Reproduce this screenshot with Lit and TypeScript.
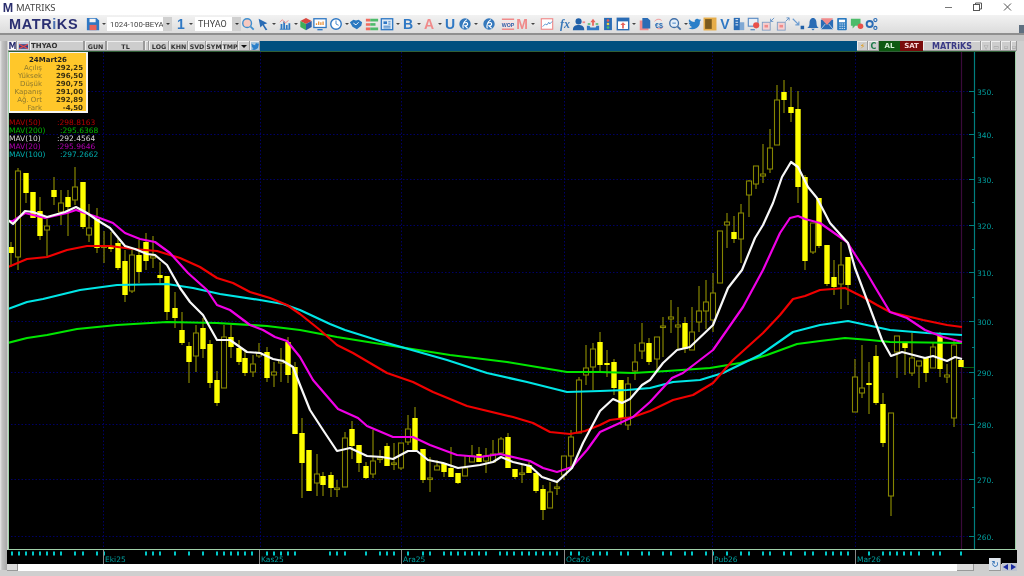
import { LitElement, html, svg, css } from 'lit';
import { customElement } from 'lit/decorators.js';

// ── Matriks chart window ──────────────────────────────────────────────────────
//
// Chart data is kept in page pixels, the svg viewBox lines up with the page.

type Candle = [number, number, number, number, number, number];

// x, wick top, wick bottom, body top, body bottom, filled
const CANDLES: Candle[] = [
  [11, 242, 267, 247, 253, 1], [18, 168, 270, 171, 257, 0], [26, 173, 203, 173, 193, 1], [33, 192, 218, 192, 218, 1],
  [40, 197, 240, 211, 236, 1], [47, 219, 256, 226, 230, 0], [54, 177, 205, 190, 197, 1], [61, 190, 225, 203, 212, 0],
  [68, 190, 236, 197, 207, 1], [75, 167, 205, 187, 200, 0], [83, 182, 229, 182, 227, 1], [89, 204, 242, 228, 235, 0],
  [97, 208, 253, 219, 248, 1], [104, 231, 263, 246, 247, 0], [111, 232, 252, 246, 249, 1], [118, 239, 270, 243, 268, 1],
  [125, 250, 302, 261, 295, 1], [132, 250, 293, 255, 291, 0], [139, 240, 283, 255, 272, 1], [146, 233, 270, 242, 261, 1],
  [153, 236, 268, 256, 258, 0], [160, 262, 283, 275, 278, 1], [167, 276, 320, 276, 312, 1], [175, 292, 328, 308, 318, 1],
  [182, 312, 345, 330, 343, 1], [189, 342, 383, 346, 362, 1], [196, 325, 372, 333, 356, 0], [203, 318, 358, 328, 349, 1],
  [210, 340, 388, 344, 383, 1], [217, 371, 406, 380, 403, 1], [224, 325, 388, 337, 388, 0], [231, 325, 358, 337, 347, 1],
  [239, 340, 365, 348, 362, 1], [245, 350, 376, 358, 373, 1], [253, 355, 377, 364, 372, 0], [259, 343, 358, 353, 356, 0],
  [267, 347, 382, 352, 378, 1], [274, 362, 387, 372, 375, 0], [281, 348, 382, 360, 363, 0], [288, 337, 383, 342, 375, 1],
  [295, 362, 434, 367, 434, 1], [302, 418, 498, 433, 463, 1], [309, 450, 491, 450, 491, 1], [317, 454, 496, 474, 483, 0],
  [323, 472, 496, 476, 485, 1], [331, 472, 497, 475, 488, 1], [337, 480, 497, 488, 489, 0], [345, 432, 487, 438, 487, 0],
  [352, 421, 459, 429, 446, 1], [359, 445, 472, 445, 463, 1], [366, 462, 479, 466, 478, 1], [373, 430, 478, 461, 474, 0],
  [380, 450, 463, 458, 459, 0], [387, 443, 466, 446, 466, 1], [394, 443, 470, 463, 464, 0], [401, 443, 470, 443, 468, 0],
  [408, 415, 445, 429, 442, 0], [415, 407, 450, 418, 450, 1], [423, 449, 483, 449, 480, 1], [430, 457, 492, 478, 479, 0],
  [437, 460, 470, 466, 470, 0], [444, 463, 477, 463, 472, 1], [451, 447, 477, 468, 477, 1], [458, 473, 484, 473, 483, 1],
  [465, 455, 476, 468, 476, 0], [472, 445, 462, 456, 462, 0], [479, 447, 462, 454, 462, 1], [486, 448, 473, 456, 461, 0],
  [493, 440, 462, 454, 462, 0], [501, 437, 453, 439, 453, 0], [508, 433, 468, 437, 468, 1], [515, 469, 479, 469, 477, 1],
  [522, 465, 483, 473, 474, 0], [529, 462, 473, 465, 473, 1], [536, 473, 493, 473, 491, 1], [543, 485, 520, 489, 510, 1],
  [550, 482, 508, 492, 508, 0], [557, 480, 495, 487, 488, 0], [564, 456, 480, 456, 475, 0], [571, 430, 467, 437, 456, 0],
  [579, 377, 433, 380, 433, 0], [586, 345, 385, 368, 375, 0], [593, 343, 390, 349, 367, 0], [600, 332, 372, 342, 365, 1],
  [607, 350, 377, 363, 365, 1], [614, 359, 395, 362, 388, 1], [621, 380, 425, 380, 418, 1], [628, 377, 430, 384, 425, 0],
  [635, 344, 380, 362, 371, 0], [642, 323, 359, 343, 351, 0], [649, 338, 365, 343, 362, 1], [657, 337, 370, 337, 359, 0],
  [663, 317, 357, 326, 327, 0], [671, 300, 333, 317, 319, 0], [678, 307, 350, 325, 327, 0], [685, 317, 353, 323, 349, 1],
  [692, 307, 350, 332, 350, 0], [699, 286, 332, 311, 322, 0], [706, 280, 329, 302, 311, 0], [713, 273, 332, 293, 320, 0],
  [720, 231, 283, 231, 283, 0], [727, 213, 248, 222, 225, 0], [734, 216, 243, 232, 239, 1], [741, 204, 263, 213, 239, 0],
  [749, 180, 217, 181, 195, 0], [756, 166, 189, 166, 184, 0], [763, 144, 183, 174, 176, 0], [770, 129, 173, 148, 169, 0],
  [777, 85, 145, 100, 145, 0], [784, 80, 113, 92, 100, 1], [791, 87, 122, 107, 113, 1], [798, 91, 203, 109, 187, 1],
  [805, 175, 270, 177, 261, 1], [813, 223, 254, 223, 252, 0], [819, 198, 248, 198, 246, 1], [827, 245, 286, 245, 284, 1],
  [834, 260, 295, 277, 287, 1], [841, 242, 309, 265, 284, 0], [848, 257, 305, 257, 285, 1], [855, 359, 412, 377, 412, 0],
  [862, 345, 398, 388, 393, 0], [869, 362, 414, 383, 384, 1], [876, 345, 405, 356, 403, 1], [883, 393, 447, 404, 443, 1],
  [891, 413, 516, 413, 496, 0], [897, 336, 378, 336, 352, 0], [905, 342, 375, 342, 348, 1], [912, 333, 376, 358, 373, 0],
  [919, 361, 388, 361, 366, 0], [926, 358, 382, 358, 373, 1], [933, 343, 368, 347, 368, 0], [940, 332, 377, 336, 369, 1],
  [947, 364, 383, 375, 377, 0], [954, 340, 427, 345, 418, 0], [961, 358, 367, 360, 367, 1],
];

const WHITE = '8,220 13,224 25,211 33,212 47,217 65,212 76,207 87,213 97,220 110,228 125,246 135,249 147,254 155,255 167,265 180,288 190,302 203,315 217,340 230,340 247,352 260,353 273,359 283,361 293,367 300,385 310,410 323,430 337,451 350,448 367,456 382,457 393,459 408,451 417,451 428,460 443,463 458,468 480,465 493,462 501,457 513,462 530,466 542,477 557,482 572,468 583,443 600,411 613,399 622,403 630,399 642,385 650,380 663,363 677,350 690,347 713,325 728,288 742,270 755,238 763,225 773,203 782,177 791,162 798,167 808,187 817,198 830,223 848,243 855,268 867,300 882,340 891,356 902,352 925,358 933,356 947,361 955,357 962,359';
const MAGENTA = '8,221 13,221 25,213 45,218 67,213 76,210 97,217 113,223 125,233 140,239 155,242 170,253 188,273 207,290 217,305 230,310 250,325 263,330 275,337 287,341 300,357 313,380 338,409 358,418 367,426 393,437 413,437 430,445 457,455 480,457 500,454 530,461 543,468 557,472 572,467 587,450 600,432 633,417 650,402 672,378 683,373 713,350 727,330 743,307 763,270 780,233 790,218 798,216 805,219 820,223 847,242 865,270 875,287 890,312 907,318 925,330 943,337 962,342';
const RED = '8,267 27,259 47,257 67,250 87,246 110,246 133,249 157,251 180,258 200,267 217,278 233,283 250,292 270,298 287,305 300,314 320,330 337,345 353,353 387,373 413,382 433,392 467,406 513,417 533,423 550,432 570,434 585,431 600,425 610,420 633,417 650,411 673,400 693,395 713,383 733,360 763,333 780,315 793,299 805,296 820,290 845,288 863,297 877,305 890,312 923,320 947,325 962,327';
const CYAN = '8,309 27,302 43,299 80,290 117,285 167,284 193,288 220,294 260,300 283,304 300,310 330,324 345,330 380,341 447,360 487,373 527,382 567,392 600,391 627,390 650,388 673,382 700,380 723,373 760,355 793,332 820,325 848,321 890,330 927,333 962,335';
const GREEN = '8,343 27,338 47,335 77,329 117,325 167,322 217,323 267,326 300,330 337,337 393,346 450,355 507,362 567,372 600,372 633,373 667,371 710,368 740,363 767,355 797,344 820,341 845,338 870,340 890,342 962,343';

const MAJOR = [[91, '350.'], [134, '340.'], [179, '330.'], [225, '320.'], [272, '310.'], [321, '300.'], [372, '290.'], [424, '280.'], [479, '270.'], [536, '260.']] as const;
const MINOR = [112, 157, 202, 249, 297, 347, 398, 452, 507];
const V_GRID = [103, 260, 401, 564, 712, 855];

const TIME_TICKS = [12, 19, 26, 33, 40, 47, 54, 61, 75, 83, 97, 104, 146, 153, 160, 175, 189, 203, 217, 224, 231, 238, 245, 252, 267, 274, 281, 288, 295, 330, 337, 345, 366, 380, 387, 394, 408, 423, 430, 444, 451, 458, 465, 472, 479, 486, 500, 507, 514, 522, 529, 536, 543, 550, 557, 571, 579, 593, 600, 607, 621, 628, 642, 649, 663, 671, 685, 692, 706, 713, 727, 741, 749, 763, 770, 784, 791, 805, 813, 826, 833, 841, 848, 869, 883, 890, 897, 904, 911, 919, 933, 940, 961];
const MONTHS: [number, string][] = [[103, 'Eki25'], [259, 'Kas25'], [401, 'Ara25'], [564, 'Oca26'], [712, 'Pub26'], [855, 'Mar26']];

const BLUE = '#2f78c4';
const PINK = '#f08a8a';

const ICONS: Record<string, ReturnType<typeof svg>> = {
  search: svg`<circle cx="7" cy="7" r="5" fill="#f6c9c0" stroke="#3f8fcf" stroke-width="1.6"/><path d="M11 11l3.5 3.5" stroke="#3f8fcf" stroke-width="2"/>`,
  cursor: svg`<path d="M3 2l10 5-4 1.5 4 6-2 .5-3.5-5.500L5 12z" fill="#2a6cb5"/>`,
  bars: svg`<path d="M2 14h12" stroke="${BLUE}"/><path d="M3 14V8h2v6zm3 0V5h2v9zm3 0V9h2v5zm3 0V7h2v7z" fill="${BLUE}"/><path d="M2 6l3-3 3 4 4-3" stroke="${PINK}" fill="none"/>`,
  cube: svg`<path d="M8 1l6.500 3.500L8 8 1.500 4.500z" fill="#d9473f"/><path d="M1.500 4.500L8 8v7l-6.500-3.500z" fill="#3fae5a"/><path d="M14.500 4.500L8 8v7l6.500-3.500z" fill="#2a5fa8"/>`,
  monitor: svg`<rect x="1" y="2" width="14" height="10" fill="#fff" stroke="${BLUE}" stroke-width="1.500"/><path d="M4 9V7m2.500 2V5m2.500 4V6m2.500 3V5" stroke="#e8923c" stroke-width="1.500"/><path d="M5 14.500h6" stroke="${BLUE}" stroke-width="1.500"/>`,
  clock: svg`<circle cx="8" cy="8" r="6" fill="#fff" stroke="${BLUE}" stroke-width="1.600"/><path d="M8 4v4l3 1.500" stroke="${BLUE}" fill="none"/>`,
  shake: svg`<path d="M1 6l4-3 3 1 3-1 4 3-1 4-5 4-5-3z" fill="#2a78c0"/><path d="M5 7l3 2 3-3" stroke="#fff" fill="none"/>`,
  list: svg`<path d="M1 2h5v3H1zM1 7h5v3H1zM1 12h5v3H1z" fill="#ef6a5e"/><path d="M6 2h9v3H6zM6 12h9v3H6z" fill="#4dbb6a"/><path d="M6 7h6v3H6z" fill="#4dbb6a"/>`,
  doc: svg`<rect x="1.500" y="2" width="13" height="12.500" fill="#dbe8f5" stroke="${BLUE}" stroke-width="1.500"/><path d="M4 5h4v3H4z" fill="${BLUE}"/><path d="M9.500 5.500H12M9.500 8H12M4 10.500h8M4 12.500h8" stroke="${BLUE}"/>`,
  swirl: svg`<circle cx="8" cy="8" r="6.500" fill="#3579bd"/><path d="M6 13c-1-4 1-8 4-10M7 7c2-1 4-1 4 1 0 2-2 2-3 2l3 3" stroke="#fff" stroke-width="1.300" fill="none"/>`,
  wop: svg`<path d="M1 2.500h14M1 14h14" stroke="${PINK}" stroke-width="1.800"/><rect x="1" y="5" width="14" height="7" fill="#fbe2e2"/><text x="8" y="11" font-size="6" font-weight="700" text-anchor="middle" fill="#2a5fa8" font-family="Liberation Sans, sans-serif">WOP</text>`,
  frame: svg`<rect x="1.500" y="2" width="13" height="12" fill="#fff" stroke="${PINK}" stroke-width="1.300"/><path d="M3 11l3-3 2 1 2-3 1 2 3-3" stroke="#4d8bc9" fill="none"/>`,
  person: svg`<circle cx="7.500" cy="5" r="3.500" fill="#1f5fa8"/><path d="M1 15c0-5 3-6 6.500-6s6.500 1 6.500 6z" fill="#1f5fa8"/><path d="M12 5h3v2h-3z" fill="${PINK}"/>`,
  inbox: svg`<path d="M1 10h3l1 2h6l1-2h3v5H1z" fill="${BLUE}"/><path d="M8 2l3 4H9v4H7V6H5z" fill="#e8635a"/><path d="M2 8h3M11 8h3" stroke="#4dbb6a" stroke-width="1.500"/>`,
  traffic: svg`<rect x="3.500" y="1" width="9" height="14" fill="#2a6cb5"/><circle cx="8" cy="4" r="1.500" fill="#f05a4a"/><circle cx="8" cy="8" r="1.500" fill="#f0d040"/><circle cx="8" cy="12" r="1.500" fill="#4dbb6a"/>`,
  box: svg`<rect x="1.500" y="1.500" width="13" height="13" fill="#fff" stroke="#2a6cb5" stroke-width="1.600"/><path d="M2 2h12v3H2z" fill="#2a6cb5"/><path d="M8 6l3 3H9v4H7V9H5z" fill="#e8635a"/>`,
  docs: svg`<path d="M2 4h7l3 3v8H2z" fill="${PINK}"/><path d="M5 1h6l3 3v9H5z" fill="#2a6cb5"/>`,
  money: svg`<path d="M3 5c2-3 6-3 8-1M13 11c-2 3-6 3-8 1" stroke="${PINK}" fill="none"/><text x="8" y="12" font-size="8" font-weight="700" text-anchor="middle" fill="#2a6cb5" font-family="Liberation Sans, sans-serif">€$</text>`,
  glass: svg`<circle cx="7" cy="7" r="5" fill="#e4eef8" stroke="#3f6fa8" stroke-width="1.500"/><path d="M11 11l3.500 3.500" stroke="#3f6fa8" stroke-width="2"/><path d="M5 7h4" stroke="${BLUE}"/>`,
  twitter: svg`<path d="M15 3.500c-.5.3-1.100.4-1.700.5.6-.4 1.100-1 1.300-1.700-.6.3-1.200.6-1.900.7a3 3 0 0 0-5.100 2.700C5 5.600 2.800 4.400 1.300 2.600c-.8 1.400-.4 3.100.9 4-.5 0-.9-.1-1.300-.4 0 1.500 1 2.700 2.400 3-.4.1-.9.100-1.300 0 .4 1.200 1.500 2 2.800 2.100A6 6 0 0 1 .5 12.600 8.500 8.500 0 0 0 13.600 5c.6-.4 1-.9 1.400-1.500z" fill="#2a7fc9"/>`,
  note: svg`<rect x="1.500" y="1.500" width="13" height="13" fill="#7a5a1e" stroke="#e6ad4a" stroke-width="1.800"/><path d="M10 2h4v12h-4z" fill="#e6ad4a"/>`,
  build: svg`<path d="M2 1h7v14H2z" fill="#2a6cb5"/><path d="M9 6h5v9H9z" fill="#7fa8d4"/><path d="M4 3h3M4 6h3M4 9h3" stroke="#fff"/>`,
  gear: svg`<rect x="1.500" y="1.500" width="11" height="9" fill="#e8eef6" stroke="#5a8cc4" stroke-width="1.300"/><circle cx="10.500" cy="9.500" r="3.500" fill="#e8504a"/><path d="M4 14.500h5" stroke="#5a8cc4" stroke-width="1.500"/>`,
  shrink: svg`<rect x="1.500" y="6" width="9" height="9" fill="#f6cfcf" stroke="#7a9cc4"/><rect x="4" y="9" width="4" height="3" fill="${PINK}"/><path d="M15 1l-4 4m0-3v3h3" stroke="#5a8cc4" fill="none"/>`,
  grow: svg`<rect x="1.500" y="6" width="9" height="9" fill="#f6cfcf" stroke="#7a9cc4"/><rect x="4" y="9" width="4" height="3" fill="${PINK}"/><path d="M11 5l4-4m-3 0h3v3" stroke="#5a8cc4" fill="none"/>`,
  diag: svg`<path d="M2 2l7 7m0-4v4H5" stroke="#6a9bd0" fill="none" stroke-width="1.300"/><rect x="11" y="10" width="4" height="4" fill="#1f5fa8"/>`,
  bell: svg`<path d="M8 1c3 0 4 3 4 6s1 4 2.500 5.500h-13C3 11 4 10 4 7s1-6 4-6z" fill="#2a6cb5"/><path d="M6 13.500h4L8 15.500z" fill="#2a6cb5"/>`,
  mail: svg`<rect x="1" y="3" width="14" height="11" fill="#2a6cb5"/><path d="M1 1.500h14L8 9z" fill="${PINK}"/><path d="M1 14l5-6m9 6l-5-6" stroke="#fff" stroke-width=".7"/>`,
  calc: svg`<rect x="2.500" y="1" width="11" height="14" rx="1" fill="#2a7ac0"/><rect x="4.500" y="3" width="7" height="3" fill="#fff"/><path d="M5 8h1.500M7.500 8H9M10 8h1.500M5 10.500h1.500M7.500 10.500H9M10 10.500h1.500M5 13h1.500M7.500 13H9M10 13h1.500" stroke="#fff"/>`,
  chat: svg`<path d="M1 2h11v8H6l-3 3v-3H1z" fill="#4dbb6a"/><circle cx="12" cy="10.500" r="3.200" fill="#e8504a"/>`,
  gears: svg`<circle cx="6.500" cy="8" r="3.500" fill="none" stroke="#2a6cb5" stroke-width="2.200"/><circle cx="13" cy="3.500" r="1.800" fill="none" stroke="#2a6cb5" stroke-width="1.300"/><circle cx="13" cy="12.500" r="1.800" fill="none" stroke="#2a6cb5" stroke-width="1.300"/>`,
};

// center x on the page, then what to draw; caret means a small dropdown arrow follows
interface Tool { c: number; icon?: string; glyph?: string; cls?: string; caret?: boolean; }

const TOOLS: Tool[] = [
  { c: 248, icon: 'search' }, { c: 263, icon: 'cursor', caret: true }, { c: 285, icon: 'bars', caret: true },
  { c: 306, icon: 'cube' }, { c: 320, icon: 'monitor' }, { c: 336, icon: 'clock', caret: true }, { c: 356, icon: 'shake' },
  { c: 372, icon: 'list' }, { c: 387, icon: 'doc', caret: true }, { c: 408, glyph: 'B', cls: 'blue', caret: true },
  { c: 429, glyph: 'A', cls: 'pink', caret: true }, { c: 450, glyph: 'U', cls: 'blue' }, { c: 465, icon: 'swirl', caret: true },
  { c: 489, icon: 'swirl' }, { c: 508, icon: 'wop' }, { c: 522, glyph: 'M', cls: 'pink', caret: true }, { c: 547, icon: 'frame' },
  { c: 565, glyph: 'fx', cls: 'fx' }, { c: 579, icon: 'person' }, { c: 593, icon: 'inbox' }, { c: 608, icon: 'traffic' },
  { c: 623, icon: 'box', caret: true }, { c: 645, icon: 'docs' }, { c: 659, icon: 'money' }, { c: 675, icon: 'glass', caret: true },
  { c: 695, icon: 'twitter' }, { c: 710, icon: 'note' }, { c: 725, glyph: 'V', cls: 'blue' }, { c: 739, icon: 'build' },
  { c: 754, icon: 'gear' }, { c: 768, icon: 'shrink' }, { c: 783, icon: 'grow' }, { c: 798, icon: 'diag' }, { c: 813, icon: 'bell' },
  { c: 827, icon: 'mail' }, { c: 842, icon: 'calc' }, { c: 857, icon: 'chat' }, { c: 871, icon: 'gears' },
];

const INFO: [string, string][] = [
  ['Açılış', '292,25'], ['Yüksek', '296,50'], ['Düşük', '290,75'], ['Kapanış', '291,00'], ['Ağ. Ort', '292,89'], ['Fark', '-4,50'],
];

const LEGEND: [string, string, string][] = [
  ['red', 'MAV(50)', ':298.8163'], ['green wide', 'MAV(200)', ':295.6368'], ['white', 'MAV(10)', ':292.4564'],
  ['violet', 'MAV(20)', ':295.9646'], ['teal wide', 'MAV(100)', ':297.2662'],
];

const LEFT_TABS: [string, number][] = [['GUN', 21], ['TL', 37]];
const MID_TABS: [string, number][] = [['LOG', 20], ['KHN', 19], ['SVD', 18], ['SYM', 16], ['TMP', 16]];

@customElement('app-root')
export class AppRoot extends LitElement {
  static styles = css`
    :host {
      display: block;
      width: 1024px;
      height: 576px;
      overflow: hidden;
      position: relative;
      background: #cfcfcf;
      font-family: 'DejaVu Sans', sans-serif;
      filter: blur(0.3px);
    }

    .title {
      height: 15px;
      background: #fff;
      display: flex;
      align-items: center;
    }
    .title .m {
      width: 12px;
      margin-left: 2px;
      color: #2b2f6e;
      font: 700 12.5px 'Liberation Sans', sans-serif;
      text-align: center;
    }
    .title .name {
      margin-left: 2px;
      font: 9.5px 'Noto Sans', sans-serif;
      color: #444;
    }
    .title .ctl {
      display: flex;
      margin-left: auto;
    }
    .title svg {
      display: block;
    }

    .toolbar {
      height: 18px;
      background: linear-gradient(#f2f2f2, #dcdcdc);
      display: flex;
      align-items: center;
      box-sizing: border-box;
      position: relative;
    }
    .brand {
      font: 700 14.5px 'Liberation Sans', sans-serif;
      color: #2a2f72;
      letter-spacing: 0.6px;
      margin-left: 9px;
      width: 73px;
      flex: none;
    }
    .brand i {
      font-style: normal;
      color: #4a6fb0;
    }
    .tool {
      width: 15px;
      height: 15px;
      flex: none;
      display: flex;
      align-items: center;
      justify-content: center;
    }
    .tool.save {
      margin-left: 3px;
    }
    .tool svg {
      width: 14px;
      height: 14px;
    }
    .tool.g {
      font: 700 14px 'Liberation Sans', sans-serif;
    }
    .blue { color: #2f78c4; }
    .pink { color: #f08a8a; }
    .tool.fx {
      font: italic 700 12px 'Liberation Serif', serif;
      color: #3a78b8;
    }
    .caret {
      width: 7px;
      flex: none;
      display: flex;
      justify-content: center;
    }
    .caret.num-caret {
      margin-left: 1px;
    }
    .caret::after {
      content: '';
      border: 2px solid transparent;
      border-top: 2.5px solid #444;
      border-bottom: 0;
    }
    .combo {
      height: 14px;
      background: #fff;
      display: flex;
      align-items: center;
      font: 7.8px 'Roboto', sans-serif;
      color: #444;
      padding-left: 3px;
      box-sizing: border-box;
      flex: none;
    }
    .combo.setup { width: 56px; white-space: nowrap; }
    .combo.sym { width: 37px; font-size: 9px; margin-left: 1px; }
    .drop {
      width: 9px;
      height: 14px;
      background: #d0d0d0;
      flex: none;
      display: flex;
      align-items: center;
      justify-content: center;
    }
    .drop::after {
      content: '';
      border: 2px solid transparent;
      border-top: 2.5px solid #333;
      border-bottom: 0;
    }
    .num {
      width: 9px;
      margin-left: 5px;
      font: 700 14px 'Liberation Sans', sans-serif;
      color: #2f78c4;
      flex: none;
    }
    .corner {
      position: absolute;
      right: 0;
      bottom: 0;
      width: 5px;
      height: 8px;
      background: #5f6f80;
    }

    .rule {
      height: 8px;
      border-top: 2px solid #8f8f8f;
      background: #c6c6c6;
      box-sizing: border-box;
    }

    .tabs {
      height: 10px;
      margin: 0 7px 0 8px;
      background: #004f7f;
      display: flex;
      font: 700 6.3px 'DejaVu Sans', sans-serif;
      color: #333;
    }
    .tab {
      background: #cdcdcd;
      box-shadow: inset -1px -1px 0 #9a9a9a, inset 1px 1px 0 #eee;
      display: flex;
      align-items: center;
      justify-content: center;
      flex: none;
      box-sizing: border-box;
    }
    .tab.mark { width: 9px; background: #fff; color: #2b2f6e; font-size: 8px; }
    .tab.flag { width: 13px; background: #c0c8d8; }
    .tab.sym { width: 54px; justify-content: flex-start; padding-left: 1px; font-size: 7px; }
    .tab.pad { width: 4px; }
    .tab.gap1 { width: 1px; }
    .tab.arrow { width: 12px; }
    .tab.arrow::after {
      content: '';
      border: 3px solid transparent;
      border-top: 3px solid #111;
      border-bottom: 0;
    }
    .tab.bird { width: 10px; background: #a9c7dd; }
    .tab svg { display: block; width: 9px; height: 9px; }
    .right { margin-left: auto; display: flex; }
    .tab.bolt { width: 11px; color: #e39a12; font-size: 8px; }
    .tab.c { width: 11px; color: #1d7a4a; font-size: 8px; }
    .tab.buy { width: 21px; background: #0f5a12; color: #d8f0d8; box-shadow: none; font-size: 7px; }
    .tab.sell { width: 23px; background: #7a0c0c; color: #f6d8d8; box-shadow: none; font-size: 7px; }
    .tab.logo { width: 58px; color: #3a3a86; font-size: 8px; }
    .tab.w { width: 10px; color: #999; font-size: 6px; }
    .tab.w5 { width: 6px; color: #999; font-size: 6px; }

    .chart {
      height: 499px;
      margin: 0 8px;
      background: #000;
      border: solid #9fd0a8;
      border-width: 1px 1px 1px 1px;
      border-top-color: #2f5f36;
      box-sizing: border-box;
      position: relative;
    }
    .chart svg {
      display: block;
      width: 1006px;
      height: 497px;
    }
    .left-bar {
      position: absolute;
      left: 0;
      top: 41px;
      width: 7px;
      height: 529px;
      background: linear-gradient(90deg, #e8e8e8, #c2c2c2 30%, #a8a8a8);
    }

    .info {
      position: absolute;
      left: 0;
      top: 0;
      width: 79px;
      height: 61px;
      box-sizing: border-box;
      background: #ffc72a;
      border: 1px solid #f4f4f4;
      border-width: 1px 2px 2px 1px;
      padding: 3px 3px 0 0;
      font-size: 7px;
      line-height: 8px;
      color: #222;
    }
    .info .day { text-align: center; font-weight: 700; margin-left: 3px; }
    .info .row { display: flex; }
    .info .k { width: 32px; text-align: right; color: #8f7a2e; }
    .info .v { flex: 1; text-align: right; font-weight: 700; color: #3a3010; }

    .legend {
      position: absolute;
      left: 0;
      top: 67px;
      font-size: 7.5px;
      line-height: 8px;
    }
    .legend .row { display: flex; }
    .legend .n { width: 48px; }
    .legend .wide .n { width: 51px; }
    .red { color: #b40000; }
    .green { color: #00b400; }
    .white { color: #d8d8d8; }
    .violet { color: #b000b0; }
    .teal { color: #00b0b0; }

    .axis {
      height: 14px;
      margin: 0 7px;
      background: #000;
    }
    .axis svg { display: block; width: 1010px; height: 14px; }

    .scroll {
      height: 7px;
      margin: 0 7px;
      display: flex;
      background: #cfcfcf;
      position: relative;
    }
    .thumb {
      width: 11px;
      background: #ddd;
      box-shadow: inset -1px -1px 0 #999;
      flex: none;
    }
    .track { width: 939px; background: #fff; flex: none; }
    .thumb.end { width: 17px; }
    .refresh {
      position: absolute;
      left: 982px;
      top: -6px;
      width: 12px;
      height: 13px;
      background: #dfe6ee;
      box-shadow: inset -1px -1px 0 #999;
      color: #2a6cb5;
      font-size: 9px;
      line-height: 13px;
      text-align: center;
    }
    .nav {
      position: absolute;
      left: 995px;
      top: -1px;
      width: 15px;
      height: 8px;
      background: #bfc4d0;
      display: flex;
      justify-content: space-around;
      align-items: center;
    }
    .nav .l {
      border: 3px solid transparent;
      border-right: 5px solid #1a2aa0;
      border-left: 0;
    }
    .nav .r {
      border: 3px solid transparent;
      border-left: 5px solid #1a2aa0;
      border-right: 0;
    }
  `;

  private renderTools() {
    let right = 241; // right edge of the symbol combo
    return TOOLS.map(t => {
      const gap = t.c - 7.5 - right;
      right = t.c + 7.5 + (t.caret ? 7 : 0);
      const cls = t.icon ? 'tool' : `tool g ${t.cls}`;
      return html`
        <div class=${cls} style="margin-left:${gap}px">
          ${t.icon ? html`<svg viewBox="0 0 16 16">${ICONS[t.icon]}</svg>` : t.glyph}
        </div>
        ${t.caret ? html`<div class="caret"></div>` : ''}
      `;
    });
  }

  private renderCandles() {
    return CANDLES.map(([x, wt, wb, bt, bb, f]) => svg`
      <rect x=${x - 0.6} y=${wt} width="1.2" height=${wb - wt} fill="#858500"></rect>
      ${f
        ? svg`<rect x=${x - 2.7} y=${bt} width="5.4" height=${Math.max(bb - bt, 2)} fill="#ffff00"></rect>`
        : svg`<rect x=${x - 2.5} y=${bt} width="5" height=${Math.max(bb - bt, 1.5)} fill="#000" stroke="#858500" stroke-width="1.1"></rect>`}
    `);
  }

  private renderChart() {
    return svg`
      ${MAJOR.map(([y]) => svg`<line x1="11" x2="974" y1=${y + 0.5} y2=${y + 0.5} stroke="#000066" stroke-dasharray="1.500 2"></line>`)}
      ${V_GRID.map(x => svg`<line x1=${x + 0.5} x2=${x + 0.5} y1="52" y2="549" stroke="#000066" stroke-dasharray="1.500 2"></line>`)}
      <line x1="961.500" x2="961.500" y1="52" y2="549" stroke="#3a0a3a" stroke-width="1.200"></line>
      ${this.renderCandles()}
      ${[[GREEN, '#00e600'], [CYAN, '#00e6e6'], [RED, '#f00000'], [MAGENTA, '#f000e6'], [WHITE, '#f8f8f8']].map(
        ([pts, c]) => svg`<polyline points=${pts} fill="none" stroke=${c} stroke-width="2.200" stroke-linejoin="round"></polyline>`,
      )}
      <line x1="962" x2="974" y1="367.500" y2="367.500" stroke="#0a5a0a"></line>
      <line x1="974.500" x2="974.500" y1="52" y2="549" stroke="#007f7f" stroke-width="1.200"></line>
      ${MAJOR.map(([y, t]) => svg`
        <line x1="969" x2="975" y1=${y + 0.5} y2=${y + 0.5} stroke="#007f7f"></line>
        <text x="977" y=${y + 3.5} font-size="7.500" fill="#00a0a0">${t}</text>
      `)}
      ${MINOR.map(y => svg`<line x1="972" x2="975" y1=${y + 0.5} y2=${y + 0.5} stroke="#007f7f"></line>`)}
    `;
  }

  private renderAxis() {
    return svg`
      ${TIME_TICKS.map(x => svg`<rect x=${x - 1} y="1.500" width="2" height="4" fill="#00c8c8"></rect>`)}
      ${MONTHS.map(([x, t]) => svg`
        <line x1=${x + 0.5} x2=${x + 0.5} y1="0" y2="14" stroke="#888"></line>
        <text x=${x + 2} y="12" font-size="7.500" fill="#00a0a0">${t}</text>
      `)}
    `;
  }

  render() {
    return html`
      <div class="title">
        <div class="m">M</div>
        <div class="name">MATRIKS</div>
        <div class="ctl">
          <svg width="79" height="15" viewBox="0 0 79 15">
            <path d="M0 7.500h7" stroke="#777"></path>
            <rect x="28.500" y="4.500" width="6" height="6" fill="none" stroke="#555"></rect>
            <path d="M30.500 4.500v-1.500h6v6h-2" fill="none" stroke="#555"></path>
            <path d="M59 3.500l7 7m0-7l-7 7" stroke="#555"></path>
          </svg>
        </div>
      </div>
      <div class="toolbar">
        <div class="brand">MATR<i>i</i>KS</div>
        <div class="tool save">
          <svg viewBox="0 0 16 16">
            <path d="M1 1h11l3 3v11H1z" fill="#2f78c4"></path>
            <rect x="4" y="2" width="7" height="4" fill="#f4f4f4"></rect>
            <rect x="4" y="9" width="8" height="6" fill="#e8635a"></rect>
          </svg>
        </div>
        <div class="caret"></div>
        <div class="combo setup">1024-100-BEYA</div>
        <div class="drop"></div>
        <div class="num">1</div>
        <div class="caret num-caret"></div>
        <div class="combo sym">THYAO</div>
        <div class="drop"></div>
        ${this.renderTools()}
        <div class="corner"></div>
      </div>
      <div class="rule"></div>
      <div class="tabs">
        <div class="tab mark">M</div>
        <div class="tab flag">
          <svg viewBox="0 0 12 12"><path d="M0 3h12v6H0z" fill="#2a3f8a"></path><path d="M0 3l12 6M12 3L0 9" stroke="#e24a4a" stroke-width="1.500"></path></svg>
        </div>
        <div class="tab sym">THYAO</div>
        <div class="tab gap1"></div>
        ${LEFT_TABS.map(([t, w]) => html`<div class="tab" style="width:${w}px">${t}</div><div class="tab gap1"></div>`)}
        <div class="tab pad"></div>
        ${MID_TABS.map(([t, w]) => html`<div class="tab" style="width:${w}px">${t}</div>`)}
        <div class="tab arrow"></div>
        <div class="tab bird"><svg viewBox="0 0 16 16">${ICONS.twitter}</svg></div>
        <div class="right">
          <div class="tab bolt">⚡</div>
          <div class="tab c">C</div>
          <div class="tab buy">AL</div>
          <div class="tab sell">SAT</div>
          <div class="tab logo">MATRiKS</div>
          <div class="tab w">▽</div>
          <div class="tab w">▭</div>
          <div class="tab w">▫</div>
          <div class="tab w5">▫</div>
        </div>
      </div>
      <div class="left-bar"></div>
      <div class="chart">
        <svg viewBox="9 52 1006 497">${this.renderChart()}</svg>
        <div class="info">
          <div class="day">24Mart26</div>
          ${INFO.map(([k, v]) => html`<div class="row"><div class="k">${k}</div><div class="v">${v}</div></div>`)}
        </div>
        <div class="legend">
          ${LEGEND.map(([c, n, v]) => html`<div class="row ${c}"><div class="n">${n}</div><div>${v}</div></div>`)}
        </div>
      </div>
      <div class="axis">
        <svg viewBox="7 0 1010 14">${this.renderAxis()}</svg>
      </div>
      <div class="scroll">
        <div class="thumb"></div>
        <div class="track"></div>
        <div class="thumb end"></div>
        <div class="refresh">↻</div>
        <div class="nav"><div class="l"></div><div class="r"></div></div>
      </div>
    `;
  }
}

declare global {
  interface HTMLElementTagNameMap {
    'app-root': AppRoot;
  }
}
